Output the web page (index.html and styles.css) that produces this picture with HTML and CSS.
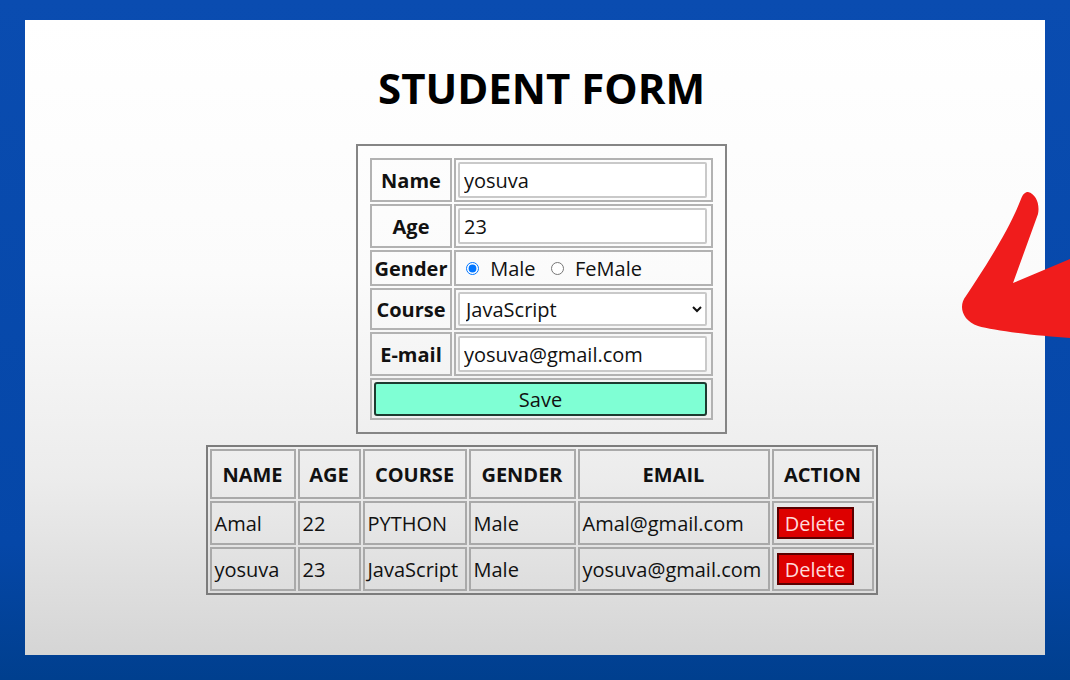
FILE: index.html
```html
<!DOCTYPE html>
<html lang="en">
<head>
    <meta charset="UTF-8">
    <meta name="viewport" content="width=device-width, initial-scale=1.0">
    <title>Student Form</title>
    <link rel="stylesheet" href="styles.css">
</head>
<body>
    <div class="panel">
        <h1>STUDENT FORM</h1>
        <form class="form-box">
            <table class="form-table">
                <tr>
                    <th>Name</th>
                    <td><input type="text" class="field" value="yosuva"></td>
                </tr>
                <tr>
                    <th>Age</th>
                    <td><input type="text" class="field" value="23"></td>
                </tr>
                <tr class="gender-row">
                    <th>Gender</th>
                    <td>
                        <label class="radio"><input type="radio" name="gender" checked> Male</label>
                        <label class="radio"><input type="radio" name="gender"> FeMale</label>
                    </td>
                </tr>
                <tr>
                    <th>Course</th>
                    <td>
                        <select class="field select">
                            <option>JavaScript</option>
                            <option>PYTHON</option>
                        </select>
                    </td>
                </tr>
                <tr>
                    <th>E-mail</th>
                    <td><input type="text" class="field" value="yosuva@gmail.com"></td>
                </tr>
                <tr>
                    <td colspan="2"><button type="button" class="save-btn">Save</button></td>
                </tr>
            </table>
        </form>

        <table class="data-table">
            <tr>
                <th class="c-name">NAME</th>
                <th class="c-age">AGE</th>
                <th class="c-course">COURSE</th>
                <th class="c-gender">GENDER</th>
                <th class="c-email">EMAIL</th>
                <th class="c-action">ACTION</th>
            </tr>
            <tr>
                <td>Amal</td>
                <td>22</td>
                <td>PYTHON</td>
                <td>Male</td>
                <td>Amal@gmail.com</td>
                <td><button type="button" class="delete-btn">Delete</button></td>
            </tr>
            <tr>
                <td>yosuva</td>
                <td>23</td>
                <td>JavaScript</td>
                <td>Male</td>
                <td>yosuva@gmail.com</td>
                <td><button type="button" class="delete-btn">Delete</button></td>
            </tr>
        </table>
    </div>

    <!-- red arrow drawn over the screen edge -->
    <svg class="arrow" viewBox="0 0 1070 680" width="1070" height="680">
        <path d="M1028,192 C1036,194 1040,204 1038,214 L1013,283 L1070,259 L1070,338 C1040,336 995,331 978,326 C962,320 958,306 966,296 C986,266 1010,228 1021,199 C1023,194 1025,192 1028,192 Z" fill="#f01c1c"/>
    </svg>
</body>
</html>
```

FILE: styles.css
```css
html, body {
    margin: 0;
    padding: 0;
}
body {
    width: 1070px;
    height: 680px;
    overflow: hidden;
    background: linear-gradient(to bottom, #0a4cb0 0%, #0547a8 80%, #003f8e 100%);
    padding: 20px 25px 25px 25px;
    box-sizing: border-box;
    font-family: "Open Sans", "Noto Sans", sans-serif;
    color: #111;
}
.panel {
    height: 635px;
    box-sizing: border-box;
    padding: 43px 0 0 13px;
    background: linear-gradient(to bottom, #ffffff 0%, #fbfbfb 40%, #ececec 72%, #d5d5d5 100%);
    display: flex;
    flex-direction: column;
    align-items: center;
}
h1 {
    margin: 0 0 32px 0;
    font-size: 42px;
    line-height: 49px;
    font-weight: 700;
    color: #000;
}
.form-box {
    border: 2px solid #858585;
    padding: 10px;
    margin: 0 0 11px 0;
}
.form-table {
    border-collapse: separate;
    border-spacing: 2px;
}
.form-table th,
.form-table td {
    border: 2px solid #b2b2b2;
    padding: 2px;
    font-size: 20px;
}
.form-table th {
    width: 78px;
    text-align: center;
    font-weight: 700;
    padding: 0;
}
.form-table td {
    width: 249px;
}
.field {
    display: block;
    width: 249px;
    height: 36px;
    box-sizing: border-box;
    border: 2px solid #c9c9c9;
    border-radius: 2px;
    padding: 0 4px;
    font-family: inherit;
    font-size: 20px;
    color: #111;
    background: #fff;
}
.select {
    height: 34px;
    padding: 0 2px;
}
.gender-row td {
    height: 32px;
    padding: 0 0 0 6px;
}
.radio {
    margin-right: 6px;
}
.radio input {
    margin: 0 6px 0 4px;
    width: 13px;
    height: 13px;
    vertical-align: 1px;
}
.save-btn {
    display: block;
    width: 333px;
    height: 34px;
    box-sizing: border-box;
    background: #7fffd4;
    border: 2px solid #1d3b30;
    border-radius: 3px;
    font-family: inherit;
    font-size: 20px;
    color: #111;
    padding: 0;
}
.data-table {
    border: 2px solid #7c7c7c;
    border-collapse: separate;
    border-spacing: 2px;
}
.data-table th,
.data-table td {
    border: 2px solid #a9a9a9;
    font-size: 20px;
    padding: 0 3px;
    height: 40px;
    white-space: nowrap;
}
.data-table th {
    height: 46px;
    font-weight: 700;
    text-align: center;
}
.data-table td {
    text-align: left;
}
.c-name { width: 76px; }
.c-age { width: 53px; }
.c-course { width: 94px; }
.c-gender { width: 97px; }
.c-email { width: 182px; }
.c-action { width: 92px; }
.delete-btn {
    display: block;
    width: 77px;
    height: 32px;
    box-sizing: border-box;
    background: #dd0000;
    border: 2px solid #5a0000;
    border-radius: 0;
    color: #ffd9d9;
    font-family: inherit;
    font-size: 20px;
    padding: 0;
}
.arrow {
    position: absolute;
    left: 0;
    top: 0;
    pointer-events: none;
}
```
